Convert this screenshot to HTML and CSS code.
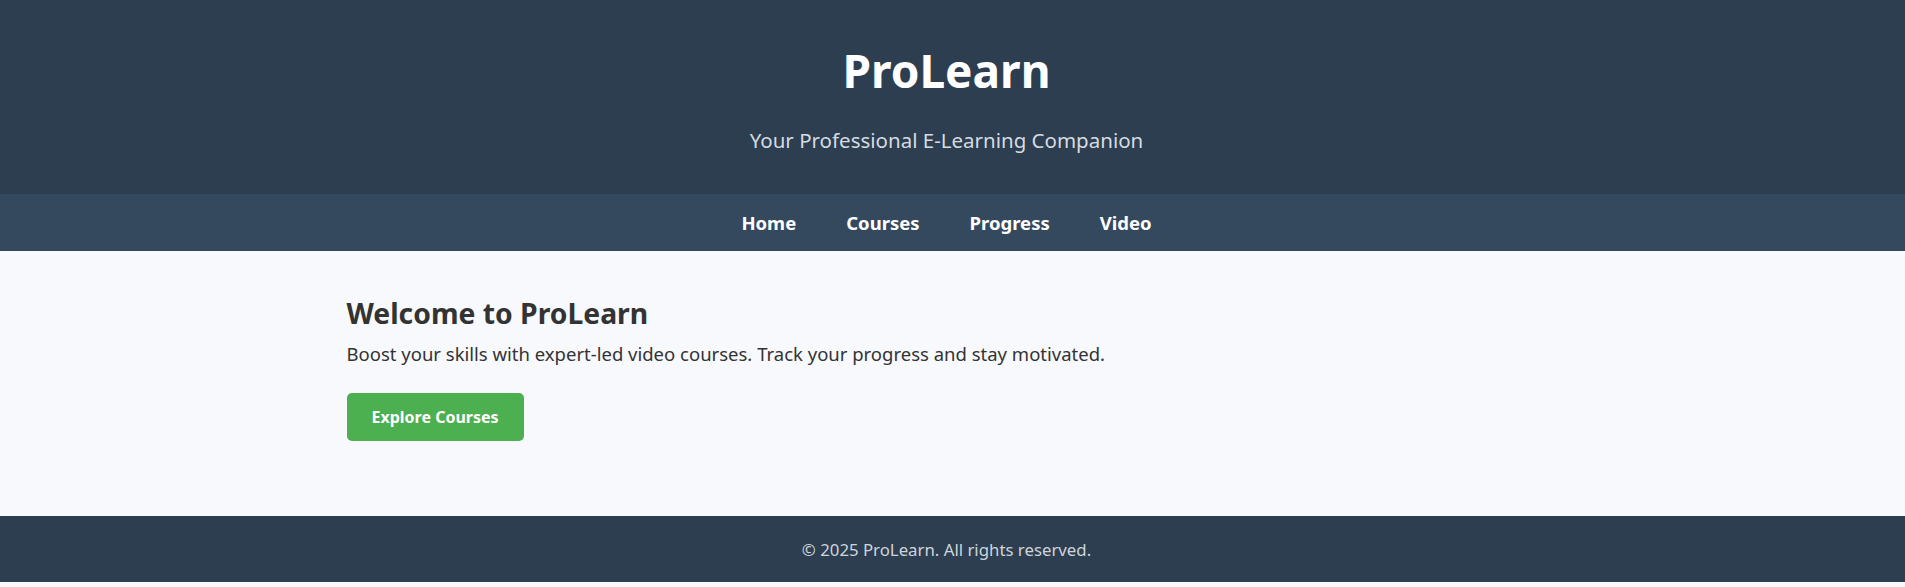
FILE: index.html
```html
<!DOCTYPE html>
<html lang="en">
<head>
<meta charset="utf-8">
<title>ProLearn</title>
<link rel="stylesheet" href="styles.css">
</head>
<body>
<header class="site-header">
  <h1 class="brand">ProLearn</h1>
  <p class="tagline">Your Professional E-Learning Companion</p>
</header>
<nav class="site-nav">
  <a href="#" class="nav-link">Home</a>
  <a href="#" class="nav-link">Courses</a>
  <a href="#" class="nav-link">Progress</a>
  <a href="#" class="nav-link">Video</a>
</nav>
<main class="main">
  <section class="hero">
    <h2 class="hero-title">Welcome to ProLearn</h2>
    <p class="hero-text">Boost your skills with expert-led video courses. Track your progress and stay motivated.</p>
    <a href="#" class="btn">Explore Courses</a>
  </section>
</main>
<footer class="site-footer">
  <p class="copy">© 2025 ProLearn. All rights reserved.</p>
</footer>
</body>
</html>
```
FILE: styles.css
```css
* { box-sizing: border-box; }
html, body { margin: 0; padding: 0; }
body {
  background: #f7f9fc;
  font-family: "Noto Sans", "Open Sans", sans-serif;
  color: #333;
}
.site-header,
.site-nav,
.main,
.site-footer {
  padding-right: 12px;
}
.site-header {
  background: #2c3e50;
  color: #fff;
  text-align: center;
  height: 194px;
  padding-top: 40px;
}
.brand {
  margin: 0;
  font-size: 46px;
  line-height: 60px;
  font-weight: 700;
}
.tagline {
  margin: 26px 0 0;
  font-size: 20.5px;
  line-height: 28px;
  color: #d5dbe1;
}
.site-nav {
  background: #34495e;
  height: 57px;
  display: flex;
  justify-content: center;
  align-items: center;
  gap: 0;
}
.nav-link {
  color: #fff;
  text-decoration: none;
  font-weight: 700;
  font-size: 18.5px;
  padding: 0 25px;
}
.main {
  height: 265px;
}
.hero {
  max-width: 1200px;
  margin: 0 auto;
  padding-top: 42px;
}
.hero-title {
  margin: 0;
  font-size: 28.3px;
  line-height: 40px;
  font-weight: 700;
  color: #333;
}
.hero-text {
  margin: 7px 0 25px;
  font-size: 18.5px;
  line-height: 28px;
}
.btn {
  display: inline-block;
  background: #4caf50;
  color: #fff;
  text-decoration: none;
  font-weight: 700;
  font-size: 16px;
  line-height: 48px;
  height: 48px;
  padding: 0 25px;
  border-radius: 5px;
}
.site-footer {
  background: #2c3e50;
  height: 66px;
  display: flex;
  align-items: center;
  justify-content: center;
}
.copy {
  margin: 0;
  color: #cfd4da;
  font-size: 16.8px;
}
```
